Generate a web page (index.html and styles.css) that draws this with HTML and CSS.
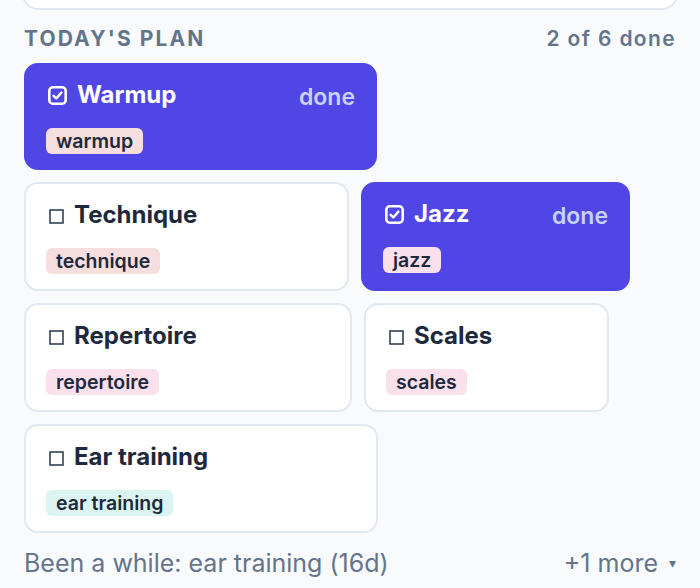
FILE: index.html
```html
<!DOCTYPE html>
<html lang="en">
<head>
  <meta charset="UTF-8">
  <meta name="viewport" content="width=device-width, initial-scale=1.0">
  <title>Practice - Today's plan</title>
  <link rel="stylesheet" href="styles.css">
</head>
<body>
  <div class="page">
    <div class="prev-card"></div>

    <div class="plan-head">
      <h2>Today's plan</h2>
      <span class="progress">2 of 6 done</span>
    </div>

    <div class="plan">
      <div class="item done" style="flex-basis: 353px">
        <div class="item-top">
          <span class="title">
            <svg class="box" width="19" height="19" viewBox="0 0 19 19"><rect x="1.3" y="1.3" width="16.4" height="16.4" rx="3.5" fill="none" stroke="#fff" stroke-width="2.6"/><path d="M5.6 9.8 L8.3 12.5 L13.4 6.6" fill="none" stroke="#fff" stroke-width="2.4" stroke-linecap="round" stroke-linejoin="round"/></svg>
            Warmup
          </span>
          <span class="state">done</span>
        </div>
        <span class="tag tag-rose">warmup</span>
      </div>

      <div class="item" style="flex-basis: 325px">
        <div class="item-top">
          <span class="title">
            <svg class="box empty" width="15" height="15" viewBox="0 0 15 15"><rect x="1" y="1" width="13" height="13" fill="none" stroke="#334155" stroke-width="1.6"/></svg>
            Technique
          </span>
        </div>
        <span class="tag tag-rose">technique</span>
      </div>

      <div class="item done" style="flex-basis: 269px">
        <div class="item-top">
          <span class="title">
            <svg class="box" width="19" height="19" viewBox="0 0 19 19"><rect x="1.3" y="1.3" width="16.4" height="16.4" rx="3.5" fill="none" stroke="#fff" stroke-width="2.6"/><path d="M5.6 9.8 L8.3 12.5 L13.4 6.6" fill="none" stroke="#fff" stroke-width="2.4" stroke-linecap="round" stroke-linejoin="round"/></svg>
            Jazz
          </span>
          <span class="state">done</span>
        </div>
        <span class="tag tag-pink">jazz</span>
      </div>

      <div class="item" style="flex-basis: 328px">
        <div class="item-top">
          <span class="title">
            <svg class="box empty" width="15" height="15" viewBox="0 0 15 15"><rect x="1" y="1" width="13" height="13" fill="none" stroke="#334155" stroke-width="1.6"/></svg>
            Repertoire
          </span>
        </div>
        <span class="tag tag-pink">repertoire</span>
      </div>

      <div class="item" style="flex-basis: 245px">
        <div class="item-top">
          <span class="title">
            <svg class="box empty" width="15" height="15" viewBox="0 0 15 15"><rect x="1" y="1" width="13" height="13" fill="none" stroke="#334155" stroke-width="1.6"/></svg>
            Scales
          </span>
        </div>
        <span class="tag tag-pink">scales</span>
      </div>

      <div class="item" style="flex-basis: 354px">
        <div class="item-top">
          <span class="title">
            <svg class="box empty" width="15" height="15" viewBox="0 0 15 15"><rect x="1" y="1" width="13" height="13" fill="none" stroke="#334155" stroke-width="1.6"/></svg>
            Ear training
          </span>
        </div>
        <span class="tag tag-teal">ear training</span>
      </div>
    </div>

    <div class="plan-foot">
      <span>Been a while: ear training (16d)</span>
      <span class="more">+1 more <span class="caret">&#9662;</span></span>
    </div>
  </div>
</body>
</html>
```

FILE: styles.css
```css
body { margin: 0; background: #f8fafc; font-family: Inter, "Noto Sans", sans-serif; color: #1e293b; }
.page { padding: 0 24px; }
.prev-card { height: 30px; margin: -24px -2px 0; background: #fff; border: 2px solid #e2e8f0; border-radius: 16px; }

.plan-head { display: flex; justify-content: space-between; align-items: baseline; margin-top: 15px; height: 28px; }
.plan-head h2 { margin: 0; font-size: 21px; font-weight: 700; text-transform: uppercase; letter-spacing: 0.1em; color: #64748b; line-height: 28px; }
.progress { font-size: 21px; font-weight: 600; letter-spacing: 0.065em; color: #64748b; }

.plan { display: flex; flex-wrap: wrap; gap: 12px; margin-top: 10px; }
.item { box-sizing: border-box; flex-grow: 0; flex-shrink: 0; display: flex; flex-direction: column; align-items: flex-start; background: #fff; border: 2px solid #e2e8f0; border-radius: 14px; padding: 15px 20px 15px; }
.item.done { background: #4f46e5; border-color: #4f46e5; color: #fff; padding: 14px 20px; }
.item-top { align-self: stretch; height: 32px; display: flex; justify-content: space-between; align-items: baseline; line-height: 32px; }
.title { font-size: 24px; font-weight: 700; display: flex; align-items: center; gap: 10px; }
.box { flex-shrink: 0; margin-left: 2px; }
.box.empty { margin-left: 3px; margin-top: 3px; }
.state { font-size: 23px; font-weight: 600; color: #c7d2fe; }

.tag { margin-top: 17px; padding: 0 10px; height: 26px; line-height: 26px; border-radius: 6px; font-size: 19.5px; font-weight: 600; color: #1e293b; }
.tag-rose { background: #f7dede; }
.tag-pink { background: #f9e0eb; }
.tag-teal { background: #dbf4f1; }

.plan-foot { display: flex; justify-content: space-between; align-items: baseline; margin-top: 15px; font-size: 25px; color: #64748b; }
.caret { font-size: 14px; vertical-align: 4px; margin-left: 4px; }
```
